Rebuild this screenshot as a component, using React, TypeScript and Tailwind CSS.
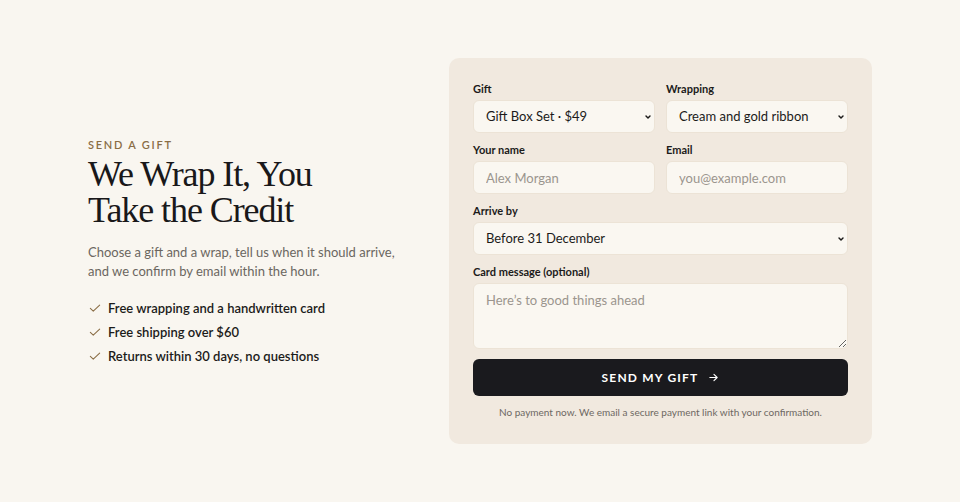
import * as React from 'react';

const SANS = "font-['Lato','Liberation_Sans',sans-serif]";

const perks = [
  'Free wrapping and a handwritten card',
  'Free shipping over $60',
  'Returns within 30 days, no questions',
];

function Check() {
  return (
    <svg width="14" height="14" viewBox="0 0 24 24" fill="none" stroke="#8a6d45" strokeWidth="1.8" strokeLinecap="round" strokeLinejoin="round">
      <path d="M4 12.5l5 5L20 7" />
    </svg>
  );
}

function Label({ children }: { children: React.ReactNode }) {
  return <label className="mb-[4px] block text-[11px] leading-[14px] font-bold text-[#1c1b1a]">{children}</label>;
}

const field =
  'h-[33px] w-full rounded-[6px] border border-[#ece3d6] bg-[#faf7f1] px-[12px] text-[13px] text-[#1c1b1a] outline-none';

function Select({ value }: { value: string }) {
  return (
    <div className="relative">
      <select className={`${field} appearance-none`} defaultValue={value}>
        <option value={value}>{value}</option>
      </select>
      <svg
        className="pointer-events-none absolute top-1/2 right-[3px] -translate-y-1/2"
        width="8"
        height="8"
        viewBox="0 0 10 10"
        fill="none"
        stroke="#1c1b1a"
        strokeWidth="1.8"
        strokeLinecap="round"
        strokeLinejoin="round"
      >
        <path d="M2.5 3.8L5 6.3l2.5-2.5" />
      </svg>
    </div>
  );
}

export default function App() {
  return (
    <div className={`${SANS} flex min-h-screen items-center bg-[#f9f6f0]`}>
      <div className="mx-auto flex w-[784px] items-center gap-[39px]">
        <div className="flex-1">
          <p className="text-[11px] font-semibold tracking-[0.16em] text-[#8a6d45]">SEND A GIFT</p>
          <h1 className="mt-[3px] font-['Liberation_Serif',serif] text-[36px] leading-[36px] tracking-[-0.03em] text-[#19181a]">
            We Wrap It, You
            <br />
            Take the Credit
          </h1>
          <p className="mt-[15px] text-[13px] leading-[19px] text-[#6b6660]">
            Choose a gift and a wrap, tell us when it should arrive,
            <br />
            and we confirm by email within the hour.
          </p>
          <ul className="mt-[18px] flex flex-col gap-[6px]">
            {perks.map((p) => (
              <li key={p} className="flex h-[18px] items-center gap-[6px] text-[13px] font-semibold text-[#1c1b1a]">
                <Check />
                {p}
              </li>
            ))}
          </ul>
        </div>

        <form className="w-[423px] rounded-[10px] bg-[#f1e9df] px-6 pt-[24px] pb-[26px]">
          <div className="grid grid-cols-2 gap-x-[11px] gap-y-[10px]">
            <div>
              <Label>Gift</Label>
              <Select value="Gift Box Set · $49" />
            </div>
            <div>
              <Label>Wrapping</Label>
              <Select value="Cream and gold ribbon" />
            </div>
            <div>
              <Label>Your name</Label>
              <input className={`${field} placeholder:text-[#9b958e]`} placeholder="Alex Morgan" />
            </div>
            <div>
              <Label>Email</Label>
              <input className={`${field} placeholder:text-[#9b958e]`} placeholder="you@example.com" />
            </div>
            <div className="col-span-2">
              <Label>Arrive by</Label>
              <Select value="Before 31 December" />
            </div>
            <div className="col-span-2">
              <Label>Card message (optional)</Label>
              <textarea
                className="block h-[66px] w-full resize-y rounded-[6px] border border-[#ece3d6] bg-[#faf7f1] px-[12px] py-[7px] text-[13px] text-[#1c1b1a] outline-none placeholder:text-[#9b958e]"
                placeholder="Here’s to good things ahead"
              />
            </div>
          </div>
          <button
            type="button"
            className="mt-[10px] flex h-[37px] w-full items-center justify-center gap-[10px] rounded-[6px] bg-[#1a1a1e] text-[12px] font-bold tracking-[0.1em] text-white"
          >
            SEND MY GIFT
            <svg width="11" height="11" viewBox="0 0 24 24" fill="none" stroke="currentColor" strokeWidth="2.4" strokeLinecap="round" strokeLinejoin="round">
              <path d="M4 12h16M13 5l7 7-7 7" />
            </svg>
          </button>
          <p className="mt-[10px] text-center text-[10px] leading-[12px] text-[#6d6862]">
            No payment now. We email a secure payment link with your confirmation.
          </p>
        </form>
      </div>
    </div>
  );
}
